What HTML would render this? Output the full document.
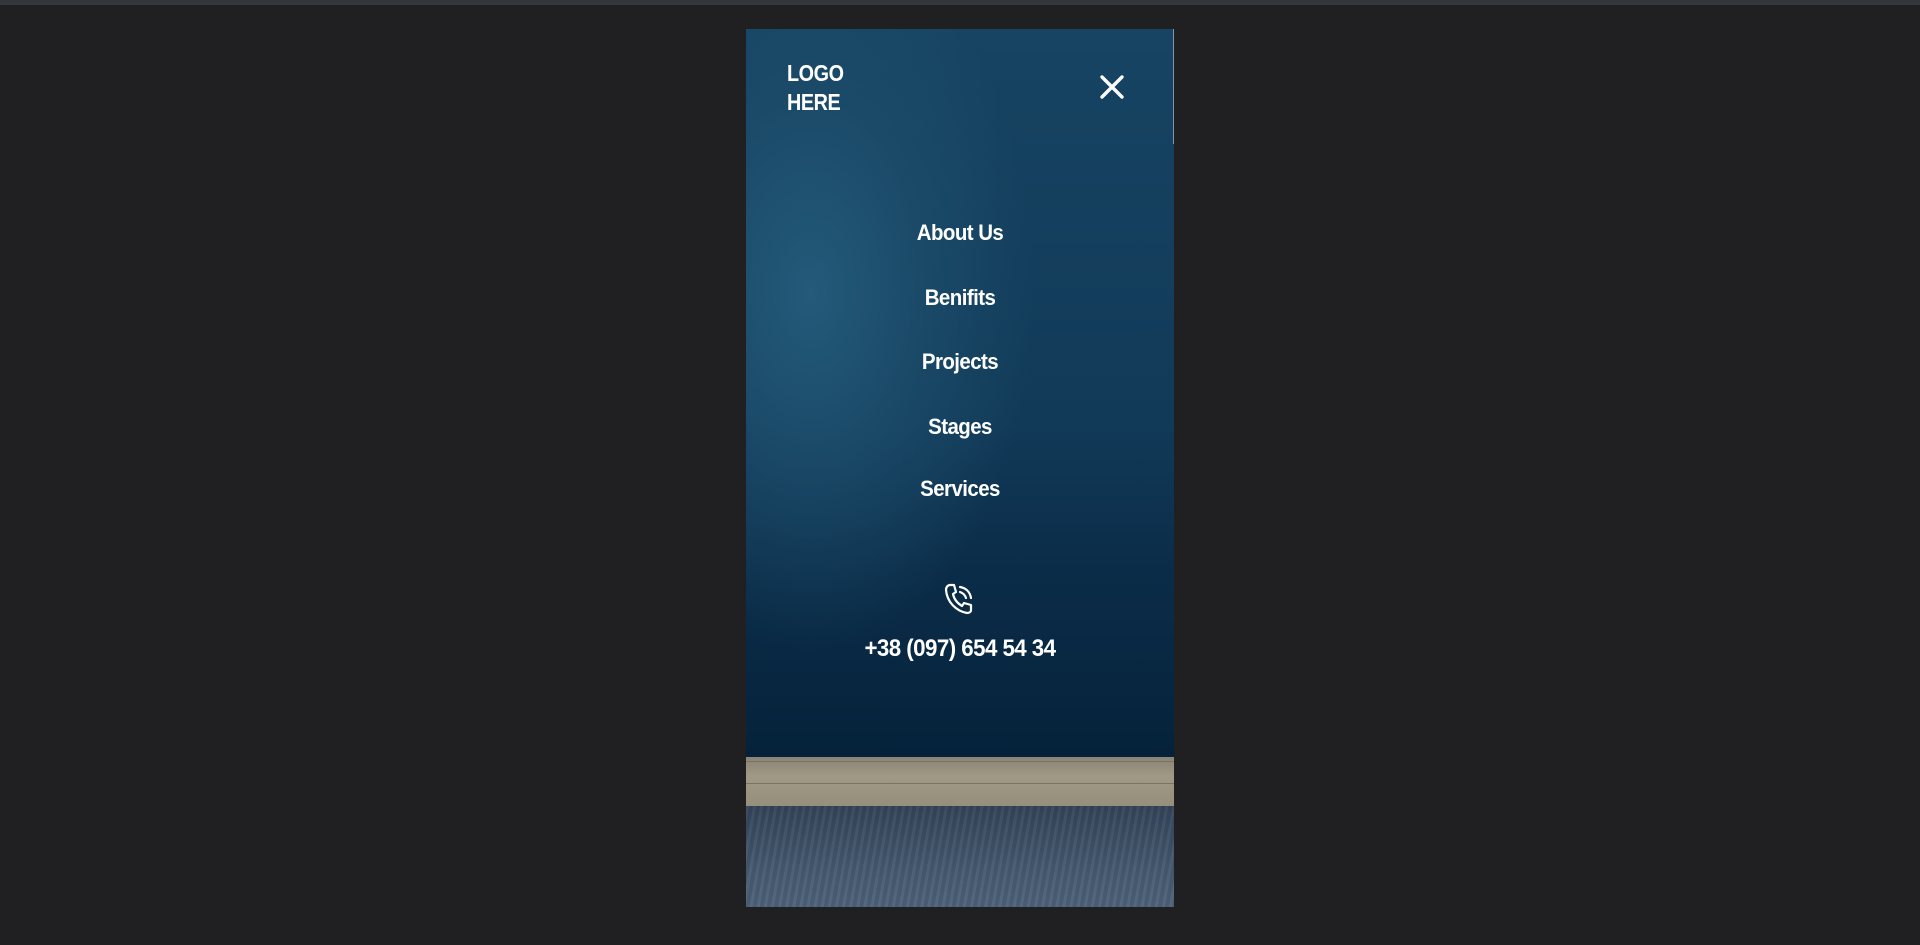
<!DOCTYPE html>
<html><head><meta charset="utf-8"><style>
html,body{margin:0;padding:0;width:1920px;height:945px;overflow:hidden;background:#202022;font-family:"Liberation Sans",sans-serif}
.top{position:absolute;left:0;top:0;width:1920px;height:5px;background:#36373b}
.panel{position:absolute;left:746px;top:29px;width:428px;height:878px;overflow:hidden;
background:radial-gradient(ellipse 70% 55% at 15% 30%,#245a7a 0%,rgba(30,80,110,0.6) 40%,rgba(0,0,0,0) 75%),linear-gradient(180deg,#174463 0%,#113a58 45%,#0b2c48 62%,#021a30 100%)}
.panel:after{content:"";position:absolute;right:0;top:0;width:1px;height:115px;background:#7a98b0}
.floor{position:absolute;left:0;top:728px;width:428px;height:49px;background:linear-gradient(180deg,#8a8474,#a09985 40%,#968f7c)}
.floor i{position:absolute;left:0;width:428px;height:1px;background:#7a7466}
.rug{position:absolute;left:0;top:777px;width:428px;height:101px;background:linear-gradient(180deg,#34445a,#46596f 60%,#4d627a)}
.rug:after{content:"";position:absolute;inset:0;background:repeating-linear-gradient(100deg,rgba(255,255,255,0.04) 0 3px,rgba(0,0,0,0.06) 3px 7px)}
.logo{position:absolute;left:41px;top:30px;color:#fff;font-weight:bold;font-size:23px;line-height:29px;letter-spacing:-0.5px;transform:scaleX(0.86);transform-origin:left}
.x{position:absolute;left:353px;top:45px}
.m{position:absolute;left:0;width:428px;text-align:center;color:#fff;font-size:22px;font-weight:bold;letter-spacing:-0.6px;transform:scaleX(0.93)}
.ph{position:absolute;left:0;width:428px;text-align:center;color:#fff;font-size:24px;font-weight:bold;top:606px;letter-spacing:-0.6px;transform:scaleX(0.93)}
</style></head><body>
<div class="top"></div>
<div class="panel">
<div class="logo">LOGO<br>HERE</div>
<svg class="x" width="26" height="26" viewBox="0 0 26 26"><path d="M3 3L23 23M23 3L3 23" stroke="#fff" stroke-width="3.4" stroke-linecap="round"/></svg>
<div class="m" style="top:191px">About Us</div>
<div class="m" style="top:256px">Benifits</div>
<div class="m" style="top:320px">Projects</div>
<div class="m" style="top:385px">Stages</div>
<div class="m" style="top:447px">Services</div>
<svg style="position:absolute;left:197px;top:553px" width="32" height="34" viewBox="0 0 32 34"><path d="M7 3 L11 3 L13 10 L10 12 C11 17 14 21 19 24 L21 21 L28 23 L28 28 C28 30 26 31 24 31 C13 29 4 20 3 8 C3 5 5 3 7 3Z" fill="none" stroke="#fff" stroke-width="2.2" stroke-linejoin="round"/><path d="M17 5 C23 6 27 10 28 16 M17 10 C20 11 22 13 23 16" fill="none" stroke="#fff" stroke-width="2.2" stroke-linecap="round"/></svg>
<div class="ph">+38 (097) 654 54 34</div>
<div class="floor"><i style="top:4px"></i><i style="top:26px"></i></div>
<div class="rug"></div>
</div>
</body></html>
